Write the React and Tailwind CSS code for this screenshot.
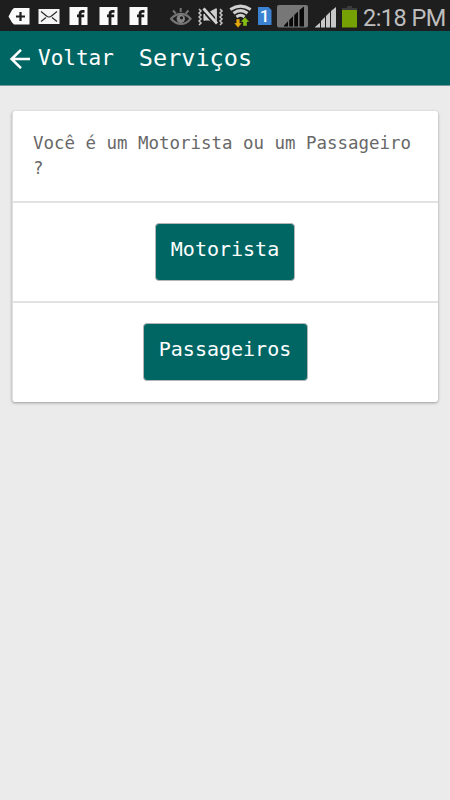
import { useState } from 'react'

const fbOffsets = ['ml-[9px]', 'ml-[11px]', 'ml-[11px]']

function TagIcon() {
  return (
    <svg className="ml-2 shrink-0" width="22" height="31" viewBox="0 0 22 31">
      <path d="M6 8H21.5V24.5H6L4 22.5L0.5 16.5L4 10Z" fill="#fafafa" />
      <path d="M12.5 12V21M8 16.5H17" stroke="#1e1e1e" strokeWidth="2.2" />
    </svg>
  )
}

function MailIcon() {
  return (
    <svg className="ml-2 shrink-0" width="22" height="31" viewBox="0 0 22 31">
      <rect x="0.5" y="9" width="21" height="15" fill="#f5f5f5" />
      <path d="M3 11.5L8.5 16Q11 18 13.5 16L19 11.5M3 21.5L8 17.5M19 21.5L14 17.5" fill="none" stroke="#2a2a2a" strokeWidth="1.2" />
    </svg>
  )
}

function FacebookIcon({ className }) {
  return (
    <svg className={`shrink-0 ${className}`} width="19" height="31" viewBox="0 0 19 31">
      <rect x="0.5" y="7" width="18" height="18" fill="#fafafa" />
      <path d="M11 25V14.2Q11 11.4 13.6 11.4H15.5M8 15.8H15.2" fill="none" stroke="#1c1c1c" strokeWidth="2.8" />
    </svg>
  )
}

function EyeIcon() {
  return (
    <svg className="ml-[22px] shrink-0" width="22" height="31" viewBox="0 0 22 31">
      <g fill="none" stroke="#747474">
        <path d="M1 18.8Q5.5 13.8 11 13.8T20.5 18.8Q16.5 24 11 24T1 18.8Z" strokeWidth="2.2" />
        <path d="M10.7 8V12M3 10.5L5.8 13.5M18.5 10.5L15.7 13.5" strokeWidth="2" />
      </g>
      <circle cx="10.8" cy="18.7" r="4.2" fill="#858585" />
      <circle cx="11.5" cy="17.8" r="1.6" fill="#1e1e1e" />
    </svg>
  )
}

function VibrateIcon() {
  return (
    <svg className="ml-1.5 shrink-0" width="26" height="31" viewBox="0 0 26 31">
      <path d="M6 12.5H10L18.5 8V24L11 20.5H6Z" fill="#cfcfcf" />
      <path d="M5.5 8.5L19 24" stroke="#1e1e1e" strokeWidth="6" />
      <path d="M5.5 8.5L19 23.5" stroke="#d6d6d6" strokeWidth="2.8" />
      <path d="M6.2 14V20.5M18 9V22" stroke="#cfcfcf" strokeWidth="1.6" />
      <g fill="none" stroke="#c6c6c6" strokeWidth="1.5">
        <path d="M1 9L3 11L1 13L3 15L1 17L3 19L1 21L3 23L1 25" />
        <path d="M22 9L24 11L22 13L24 15L22 17L24 19L22 21L24 23L22 25" />
      </g>
    </svg>
  )
}

function WifiIcon() {
  return (
    <svg className="ml-[5px] shrink-0" width="23" height="31" viewBox="0 0 23 31">
      <g fill="none" stroke="#d0d0d0" strokeWidth="3">
        <path d="M1.3 9.5Q11.5 2.7 21.7 9.5" />
        <path d="M4.5 13.3Q11.5 8 18.5 13.3" />
        <path d="M7.5 17Q11.5 13.5 15.5 17" />
      </g>
      <path d="M7.2 19H10.8V23H13L9 27.8L5 23H7.2Z" fill="#e5a90c" stroke="#1e1e1e" strokeWidth="0.4" />
      <path d="M14 26V22H11.5L16 17L20.5 22H18V26Z" fill="#86be12" stroke="#1e1e1e" strokeWidth="0.4" />
    </svg>
  )
}

function SimIcon() {
  return (
    <div className="relative ml-[5px] h-[18px] w-[15px] shrink-0">
      <svg className="block" width="15" height="18" viewBox="0 0 15 18">
        <path d="M1 0H11.5L14.5 3V18H1Z" fill="#3b82d2" />
      </svg>
      <span className="absolute inset-0 text-center font-['Roboto',sans-serif] text-[17px] font-medium leading-[19px] text-white">1</span>
    </div>
  )
}

function SignalOffIcon() {
  return (
    <svg className="ml-[5px] shrink-0" width="31" height="31" viewBox="0 0 31 31">
      <rect x="0" y="5" width="31" height="22.5" rx="2" fill="#777" />
      <path d="M7 26.5V25.5L11 21.3V26.5ZM12.2 26.5V20L16 16.3V26.5ZM17.2 26.5V15L21 11.5V26.5ZM22.5 26.5V10L27 6.5V26.5Z" fill="#090909" />
    </svg>
  )
}

function SignalIcon() {
  return (
    <svg className="ml-[7px] shrink-0" width="22" height="31" viewBox="0 0 22 31">
      <path d="M0 27.5V27L5 22.7V27.5ZM6 27.5V21L10 17V27.5ZM11 27.5V16L15 12V27.5ZM16 27.5V11L21 7V27.5Z" fill="#c7c7c7" />
    </svg>
  )
}

function BatteryIcon() {
  return (
    <svg className="ml-[5px] shrink-0" width="15" height="31" viewBox="0 0 15 31">
      <path d="M5 6H10V8H15V10H0V8H5Z" fill="#3b3b3b" />
      <rect y="10" width="15" height="17.5" fill="#75a105" />
    </svg>
  )
}

function StatusBar() {
  return (
    <div className="flex h-[31px] items-center bg-[#1e1e1e]">
      <TagIcon />
      <MailIcon />
      {fbOffsets.map((offset, index) => (
        <FacebookIcon className={offset} key={index} />
      ))}
      <EyeIcon />
      <VibrateIcon />
      <WifiIcon />
      <SimIcon />
      <SignalOffIcon />
      <SignalIcon />
      <BatteryIcon />
      <span className="ml-[6px] mt-[5px] whitespace-nowrap font-['Roboto',sans-serif] text-[23.5px] leading-[26px] tracking-[-0.55px] text-[#bebebe]">2:18 PM</span>
    </div>
  )
}

export default function App() {
  const [role, setRole] = useState('')

  return (
    <div className="h-screen w-full overflow-hidden bg-[#ebebeb] font-['DejaVu_Sans_Mono',monospace]">
      <StatusBar />
      <header className="flex h-[55px] items-center border-b border-[#6f9c9b] bg-[#006664] text-white">
        <button className="flex items-center">
          <svg className="ml-[10px] mt-0.5" width="20" height="20" viewBox="0 0 20 20">
            <path d="M11 0.8L1.6 10L11 19.2M1.6 10H20" fill="none" stroke="#fff" strokeWidth="2.5" />
          </svg>
          <span className="ml-2 text-[21px] leading-6">Voltar</span>
        </button>
        <h1 className="ml-[25px] text-[23.5px] leading-7">Serviços</h1>
      </header>

      <div className="mx-3 mt-[25px] h-[291px] rounded-[3px] border-l border-[#dedede] bg-white shadow-[0_1px_3px_rgba(0,0,0,0.35)]">
        <div className="h-[92px] border-b-2 border-[#e2e2e2] px-5 pt-5">
          <p className="text-[17.45px] leading-[25px] text-[#686868]">Você é um Motorista ou um Passageiro ?</p>
        </div>
        <div className="flex h-[100px] justify-center border-b-2 border-[#e2e2e2] pr-px pt-[20px]">
          <button onClick={() => setRole('motorista')} className="h-[58px] w-[140px] rounded border border-[#b5b5b5] bg-[#006664] pb-[7px] text-[20px] text-white">
            Motorista
          </button>
        </div>
        <div className="flex justify-center pr-px pt-[20px]">
          <button onClick={() => setRole('passageiro')} className="h-[58px] w-[165px] rounded border border-[#b5b5b5] bg-[#006664] pb-[7px] text-[20px] text-white">
            Passageiros
          </button>
        </div>
      </div>
    </div>
  )
}
